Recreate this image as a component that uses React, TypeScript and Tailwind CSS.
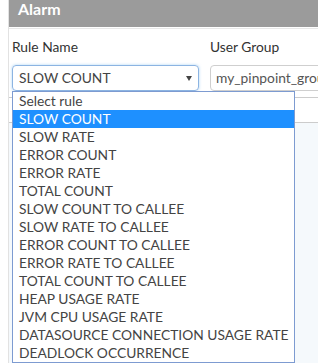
import React from "react";

const rules = [
  "Select rule",
  "SLOW COUNT",
  "SLOW RATE",
  "ERROR COUNT",
  "ERROR RATE",
  "TOTAL COUNT",
  "SLOW COUNT TO CALLEE",
  "SLOW RATE TO CALLEE",
  "ERROR COUNT TO CALLEE",
  "ERROR RATE TO CALLEE",
  "TOTAL COUNT TO CALLEE",
  "HEAP USAGE RATE",
  "JVM CPU USAGE RATE",
  "DATASOURCE CONNECTION USAGE RATE",
  "DEADLOCK OCCURRENCE",
];

export default function App() {
  return (
    <div className="relative w-[318px] h-[363px] bg-white overflow-hidden font-['Lato','Noto_Sans',sans-serif]">
      <div className="ml-[8px] h-full border-l border-[#e2e2e2] flex flex-col">
        <div className="h-[27px] bg-[#9b9b9b] text-white text-[16px] font-bold pl-[9px] leading-[18px] shrink-0">
          Alarm
        </div>
        <div className="mt-[1px] border-t border-[#e8e8e8] shrink-0" />
        <div className="flex pl-[3px] pt-[9px] text-[13.8px] leading-[18px] text-[#333] shrink-0">
          <div className="w-[198px] shrink-0">Rule Name</div>
          <div className="whitespace-nowrap">User Group</div>
        </div>
        <div className="flex pl-[3px] mt-[9px] text-[13.8px] shrink-0">
          <div className="w-[187px] shrink-0 h-[26px] border border-[#8cb4e2] rounded-[4px] shadow-[0_0_3px_rgba(102,175,233,0.55)] flex items-center justify-between pl-[6px] pr-[6px] text-[#444]">
            <span>SLOW COUNT</span>
            <span className="w-0 h-0 border-l-[3px] border-r-[3px] border-t-[5px] border-l-transparent border-r-transparent border-t-[#444]" />
          </div>
          <div className="ml-[11px] w-[140px] shrink-0 h-[26px] border border-[#cfcfcf] rounded-[4px] flex items-center pl-[5px] text-[#555] whitespace-nowrap overflow-hidden">
            my_pinpoint_group
          </div>
        </div>
        <div className="mt-[6px] h-[26px] border-y border-[#cccccc] shrink-0" />
        <div className="flex-1 bg-[#f5f9fc]" />
      </div>
      <div className="absolute left-[12px] top-[91px] w-[283px] border border-[#7d9bd1] bg-white">
        {rules.map((r, i) => (
          <div
            key={r}
            className={
              i === 1
                ? "h-[18px] leading-[18px] pl-[6px] text-[13.8px] bg-[#1e90ff] text-white whitespace-nowrap"
                : "h-[18px] leading-[18px] pl-[6px] text-[13.8px] text-[#444] whitespace-nowrap"
            }
          >
            {r}
          </div>
        ))}
      </div>
    </div>
  );
}
